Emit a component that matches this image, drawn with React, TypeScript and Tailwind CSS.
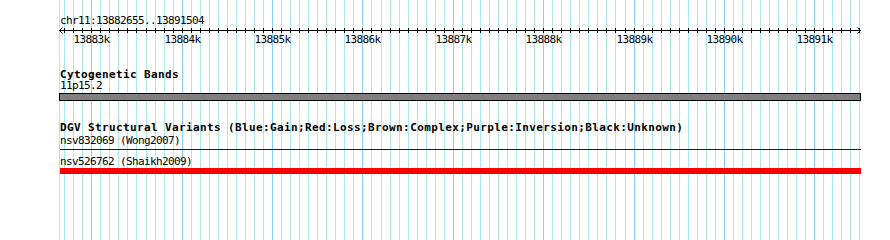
import React from "react";

const pxAt = (k: number) => Math.round(91.3 + k * 9.0375);

const ticks: { x: number; major: boolean; label?: string }[] = [];
for (let k = -3; k <= 85; k++) {
  const major = ((k % 10) + 10) % 10 === 0;
  const kb = 13883 + Math.floor(k / 10);
  ticks.push({ x: pxAt(k), major, label: major ? `${kb}k` : undefined });
}

const mono = { fontFamily: '"DejaVu Sans Mono", "Liberation Mono", monospace' };

function Grid() {
  return (
    <svg className="absolute left-0 top-0" width={890} height={240} shapeRendering="crispEdges">
      <rect x={59} y={0} width={1} height={240} fill="#a8e8ee" />
      {ticks.map((t, i) => (
        <rect key={i} x={t.x} y={0} width={1} height={240} fill={t.major ? "#87cefa" : "#a8e8ee"} />
      ))}
    </svg>
  );
}

function Ruler() {
  return (
    <svg className="block" width={890} height={20} shapeRendering="crispEdges">
      <rect x={59} y={4} width={802} height={1} fill="#000" />
      {ticks.map((t, i) => (
        <rect key={i} x={t.x} y={2} width={1} height={5} fill="#000" />
      ))}
      <path d="M62.5 1.5 L59.5 4.5 L62.5 7.5" stroke="#000" fill="none" shapeRendering="auto" />
      <path d="M857.5 1.5 L860.5 4.5 L857.5 7.5" stroke="#000" fill="none" shapeRendering="auto" />
      {ticks
        .filter((t) => t.major)
        .map((t, i) => (
          <text
            key={i}
            x={t.x + 0.5}
            y={17}
            textAnchor="middle"
            fontSize={11}
            letterSpacing={-0.62}
            fill="#000"
            style={mono}
          >
            {t.label}
          </text>
        ))}
    </svg>
  );
}

export default function App() {
  return (
    <div className="relative w-[890px] h-[240px] bg-white overflow-hidden text-black" style={mono}>
      <Grid />
      <div className="relative flex flex-col">
        <div className="ml-[60px] mt-[16px] h-[10px] text-[11px] leading-[10px] tracking-[-0.62px] whitespace-pre">
          chr11:13882655..13891504
        </div>
        <Ruler />
        <div className="ml-[60px] mt-[24px] h-[10px] text-[11px] leading-[10px] font-bold tracking-[0.38px] whitespace-pre">
          Cytogenetic Bands
        </div>
        <div className="ml-[60px] mt-[1px] h-[10px] text-[11px] leading-[10px] tracking-[-0.62px] whitespace-pre">
          11p15.2
        </div>
        <div className="ml-[59px] mt-[2px] w-[802px] h-[8px] border border-black bg-[#808080]" />
        <div className="ml-[60px] mt-[22px] h-[10px] text-[11px] leading-[10px] font-bold tracking-[0.38px] whitespace-pre">
          DGV Structural Variants (Blue:Gain;Red:Loss;Brown:Complex;Purple:Inversion;Black:Unknown)
        </div>
        <div className="ml-[60px] mt-[3px] h-[10px] text-[11px] leading-[10px] tracking-[-0.62px] whitespace-pre">
          nsv832069 (Wong2007)
        </div>
        <div className="ml-[60px] mt-[3px] w-[801px] h-[1px] bg-[#0000ff]" />
        <div className="ml-[60px] mt-[7px] h-[10px] text-[11px] leading-[10px] tracking-[-0.62px] whitespace-pre">
          nsv526762 (Shaikh2009)
        </div>
        <div className="ml-[60px] mt-[1px] w-[801px] h-[6px] bg-[#ff0000]" />
      </div>
    </div>
  );
}
